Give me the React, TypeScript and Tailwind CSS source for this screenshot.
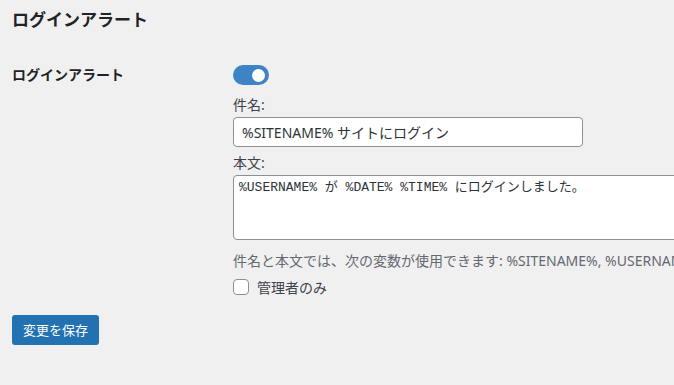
import React from "react";

const font = { fontFamily: '"Noto Sans", "Noto Sans CJK JP", sans-serif' };

export default function App() {
  return (
    <div
      className="w-full h-[385px] overflow-hidden bg-[#f0f0f1] pl-[12px] text-[#1d2327]"
      style={font}
    >
      <h2 className="pt-[8px] h-[32px] text-[17px] leading-[24px] font-bold text-[#1d2327]">
        ログインアラート
      </h2>
      <div className="flex mt-[33px]">
        <div className="w-[221px] shrink-0 text-[14px] leading-[20px] font-bold text-[#1d2327]">
          ログインアラート
        </div>
        <div className="flex flex-col min-w-0">
          <button
            type="button"
            className="relative w-[36px] h-[20px] rounded-full bg-[#3f83c7]"
            aria-label="toggle"
          >
            <span className="absolute right-[4px] top-[3.5px] w-[13px] h-[13px] rounded-full bg-white" />
          </button>
          <div className="mt-[10px] text-[14px] leading-[20px] text-[#3c434a]">件名:</div>
          <div className="mt-[2px] w-[350px] h-[30px] rounded-[4px] border border-[#8c8f94] bg-white pl-[8px] flex items-center text-[14px] text-[#2c3338] whitespace-nowrap">
            %SITENAME% サイトにログイン
          </div>
          <div className="mt-[6px] text-[14px] leading-[20px] text-[#3c434a]">本文:</div>
          <div
            className="mt-[2px] w-[520px] h-[65px] rounded-[4px] border border-[#8c8f94] bg-white pl-[5px] pt-[2px] text-[13px] leading-[20px] text-[#2c3338] whitespace-nowrap"
            style={{ fontFamily: '"Liberation Mono", "Noto Sans CJK JP", monospace' }}
          >
            %USERNAME% が %DATE% %TIME% にログインしました。
          </div>
          <div className="mt-[11px] text-[14px] leading-[20px] text-[#646970] whitespace-nowrap">
            件名と本文では、次の変数が使用できます: %SITENAME%, %USERNAME%, %DATE%, %TIME%
          </div>
          <label className="mt-[6px] flex items-center h-[20px] text-[14px] text-[#3c434a]">
            <span className="w-[16px] h-[16px] rounded-[4px] border border-[#8c8f94] bg-white shrink-0" />
            <span className="ml-[8px]">管理者のみ</span>
          </label>
        </div>
      </div>
      <button
        type="button"
        className="mt-[18px] h-[30px] w-[87px] rounded-[3px] bg-[#2271b1] text-white text-[13px] leading-[28px] flex items-center justify-center"
      >
        変更を保存
      </button>
    </div>
  );
}
